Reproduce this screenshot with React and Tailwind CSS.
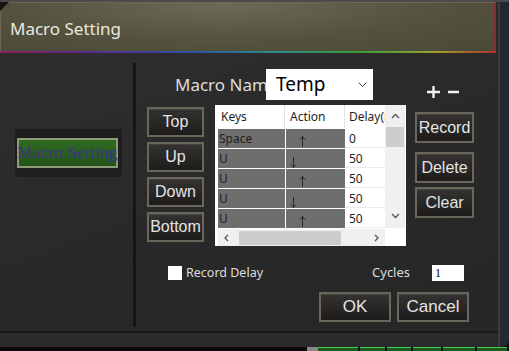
import React from 'react'

const btn =
  "flex items-center justify-center border-2 border-[#6b665b] bg-[linear-gradient(180deg,#343332,#1d1c1b)] text-[#e4e4e4] text-[16px] font-['Liberation_Sans',Arial,sans-serif] shadow-[inset_0_1px_0_rgba(255,255,255,0.08)]"

const rows = [
  { key: 'Space', act: 'up', delay: '0' },
  { key: 'U', act: 'down', delay: '50' },
  { key: 'U', act: 'up', delay: '50' },
  { key: 'U', act: 'down', delay: '50' },
  { key: 'U', act: 'up', delay: '50' },
]

function Arrow({ dir }) {
  return dir === 'up' ? (
    <svg width="7" height="12" viewBox="0 0 7 12" className="ml-[13px] mt-[6px]">
      <path d="M3.5 1.5V12M1 4.5L3.5 1.5L6 4.5" stroke="#2a2a2a" strokeWidth="1" fill="none" />
    </svg>
  ) : (
    <svg width="7" height="12" viewBox="0 0 7 12" className="ml-[4px] mt-[8px]">
      <path d="M3.5 0V10.5M1 7.5L3.5 10.5L6 7.5" stroke="#2a2a2a" strokeWidth="1" fill="none" />
    </svg>
  )
}

function MacroTable() {
  return (
    <div className="w-[191px] h-[141px] bg-white flex font-['Noto_Sans',sans-serif] text-[12px] text-[#1e1e1e]">
      <div className="w-[170px] flex flex-col">
        {/* header */}
        <div className="h-[23px] flex items-center">
          <div className="w-[70px] pl-[6px] h-full flex items-center border-r border-[#e3e3e3]">Keys</div>
          <div className="w-[60px] pl-[5px] h-full flex items-center border-r border-[#e3e3e3]">Action</div>
          <div className="w-[40px] pl-[4px] h-full flex items-center overflow-hidden whitespace-nowrap">Delay(ms)</div>
        </div>
        <div className="flex flex-col pl-[3px] pt-[1px] gap-[1px]">
          {rows.map((r, i) => (
            <div key={i} className="h-[19px] flex">
              <div className="w-[67px] bg-[#6e6e6e] pl-[1px] leading-[19px]">{r.key}</div>
              <div className="w-[59px] ml-[1px] bg-[#6e6e6e] flex">
                <Arrow dir={r.act} />
              </div>
              <div className="w-[40px] pl-[4px] leading-[19px] border-b border-[#ececec]">{r.delay}</div>
            </div>
          ))}
        </div>
        {/* horizontal scrollbar */}
        <div className="mt-[1px] ml-[3px] h-[17px] bg-[#f0f0f0] flex items-center">
          <svg width="7" height="8" viewBox="0 0 7 8" className="ml-[5px]">
            <path d="M5 1L2 4L5 7" stroke="#555" strokeWidth="1.3" fill="none" />
          </svg>
          <div className="ml-[9px] w-[102px] h-[14px] bg-[#cdcdcd]" />
          <svg width="7" height="8" viewBox="0 0 7 8" className="ml-[32px]">
            <path d="M2 1L5 4L2 7" stroke="#555" strokeWidth="1.3" fill="none" />
          </svg>
        </div>
      </div>
      {/* vertical scrollbar */}
      <div className="w-[20px] flex flex-col">
        <div className="h-[123px] bg-[#f0f0f0] flex flex-col items-center">
          <svg width="9" height="6" viewBox="0 0 9 6" className="mt-[8px]">
            <path d="M1 5L4.5 1.5L8 5" stroke="#555" strokeWidth="1.3" fill="none" />
          </svg>
          <div className="mt-[8px] w-[18px] h-[20px] bg-[#cdcdcd]" />
          <svg width="9" height="6" viewBox="0 0 9 6" className="mt-[66px]">
            <path d="M1 1L4.5 4.5L8 1" stroke="#555" strokeWidth="1.3" fill="none" />
          </svg>
        </div>
      </div>
    </div>
  )
}

export default function App() {
  return (
    <div className="w-[509px] h-[351px] bg-[#0b0b0b] overflow-hidden font-['Noto_Sans',sans-serif]">
      <div className="w-[509px] h-[347px] flex bg-[#272930] border-t-2 border-[#4b4b4b] rounded-br-[8px] overflow-hidden">
        <div className="w-[500px] flex flex-col border-r-2 border-[#3b3c41] bg-[linear-gradient(160deg,#2f2f2f,#292929_55%,#262626)]">
          {/* title bar */}
          <div className="w-[496px] h-[51px] flex flex-col relative">
            <div className="flex-1 flex items-center pl-[9px] border-r-2 border-[#8e2a2e] border-t border-l border-t-[#6e6852] border-l-[#6e6852] bg-[radial-gradient(ellipse_at_45%_0%,#6d6b56,#55533f_55%,#4a4837)]">
              <span className="text-[17px] text-[#e9e8df] leading-none mt-[2px]">Macro Setting</span>
            </div>
            <div className="h-[2px] bg-[linear-gradient(90deg,#8a2358,#5b2a8e_18%,#2f4fa6_38%,#2a8a8a_55%,#3a9a3a_72%,#a0a030_88%,#b03030)]" />
            <div className="absolute left-0 top-0 w-0 h-0 border-t-[9px] border-r-[9px] border-t-[#141414] border-r-transparent" />
          </div>

          {/* body */}
          <div className="h-[278px] flex">
            {/* left panel */}
            <div className="w-[133px] pt-[76px] pl-[15px]">
              <div className="w-[107px] h-[48px] bg-[#1f1d1d] pt-[9px] pl-[2px]">
                <div className="w-[101px] h-[30px] border-2 border-[#8f9c77] bg-[linear-gradient(180deg,#2f6a22,#23541a)] flex items-center justify-center overflow-visible">
                  <span className="whitespace-nowrap text-[17px] text-[#40308f] font-['Liberation_Serif',serif] tracking-[0.3px]">Macro Setting</span>
                </div>
              </div>
            </div>
            {/* separator */}
            <div className="w-[3px] mt-[10px] h-[264px] bg-[#161616]" />

            {/* right area */}
            <div className="flex-1 flex flex-col">
              {/* header row */}
              <div className="mt-[16px] h-[31px] flex items-start">
                <div className="ml-[39px] w-[91px] h-[31px] overflow-hidden whitespace-nowrap text-[17px] text-[#dcdcdc] leading-[31px]">
                  Macro Name
                </div>
                <div className="w-[107px] h-[31px] bg-white flex items-center pl-[10px] text-[19px] text-black">
                  <span className="leading-none">Temp</span>
                  <svg width="9" height="5" viewBox="0 0 9 5" className="ml-auto mr-[6px]">
                    <path d="M0.5 0.5L4.5 4.5L8.5 0.5" stroke="#444" strokeWidth="1" fill="none" />
                  </svg>
                </div>
                <div className="ml-[54px] mt-[17px] flex items-center gap-[8px]">
                  <svg width="13" height="12" viewBox="0 0 13 12">
                    <path d="M6.5 0V12M0 6H13" stroke="#f2f2f2" strokeWidth="2.4" />
                  </svg>
                  <svg width="11" height="12" viewBox="0 0 11 12">
                    <path d="M0 6H11" stroke="#f2f2f2" strokeWidth="2.4" />
                  </svg>
                </div>
              </div>

              {/* main row */}
              <div className="mt-[5px] flex items-start">
                <div className="ml-[11px] mt-[2px] w-[57px] flex flex-col gap-[5px]">
                  <div className={`${btn} h-[30px]`}>Top</div>
                  <div className={`${btn} h-[30px]`}>Up</div>
                  <div className={`${btn} h-[30px]`}>Down</div>
                  <div className={`${btn} h-[30px]`}>Bottom</div>
                </div>
                <div className="ml-[11px]">
                  <MacroTable />
                </div>
                <div className="ml-[9px] mt-[7px] w-[59px] flex flex-col">
                  <div className={`${btn} h-[31px]`}>Record</div>
                  <div className={`${btn} h-[31px] mt-[9px]`}>Delete</div>
                  <div className={`${btn} h-[31px] mt-[4px]`}>Clear</div>
                </div>
              </div>

              {/* options row */}
              <div className="mt-[19px] h-[16px] flex items-center text-[#dcdcdc]">
                <div className="ml-[32px] w-[14px] h-[14px] bg-white" />
                <span className="ml-[4px] text-[12.5px]">Record Delay</span>
                <span className="ml-[109px] text-[13px]">Cycles</span>
                <div className="ml-[22px] w-[32px] h-[16px] bg-white text-black text-[12px] pl-[3px] leading-[16px] font-['Liberation_Serif',serif]">1</div>
              </div>

              {/* ok / cancel */}
              <div className="mt-[11px] flex">
                <div className={`${btn} ml-[183px] w-[72px] h-[30px] !text-[17px]`}>OK</div>
                <div className={`${btn} ml-[6px] w-[72px] h-[30px] !text-[17px]`}>Cancel</div>
              </div>
            </div>
          </div>

          {/* bottom */}
          <div className="h-[2px] bg-[#191919]" />
          <div className="flex-1 bg-[#2b2b2b]" />
        </div>
        <div className="flex-1 bg-[#262830]" />
      </div>
      {/* taskbar hints */}
      <div className="h-[4px] flex">
        <div className="w-[307px]" />
        <div className="w-[11px] bg-[#8a8a8a]" />
        <div className="w-[40px] bg-[#1d5a22] border-t border-[#3fcf4a]" />
        <div className="ml-[2px] w-[25px] bg-[#1d5a22] border-t border-[#3fcf4a]" />
        <div className="ml-[2px] w-[24px] bg-[#1d5a22] border-t border-[#3fcf4a]" />
        <div className="ml-[2px] w-[28px] bg-[#1d5a22] border-t border-[#3fcf4a]" />
        <div className="ml-[2px] w-[32px] bg-[#1d5a22] border-t border-[#3fcf4a]" />
        <div className="ml-[2px] w-[30px] bg-[#1d5a22] border-t border-[#3fcf4a]" />
      </div>
    </div>
  )
}
